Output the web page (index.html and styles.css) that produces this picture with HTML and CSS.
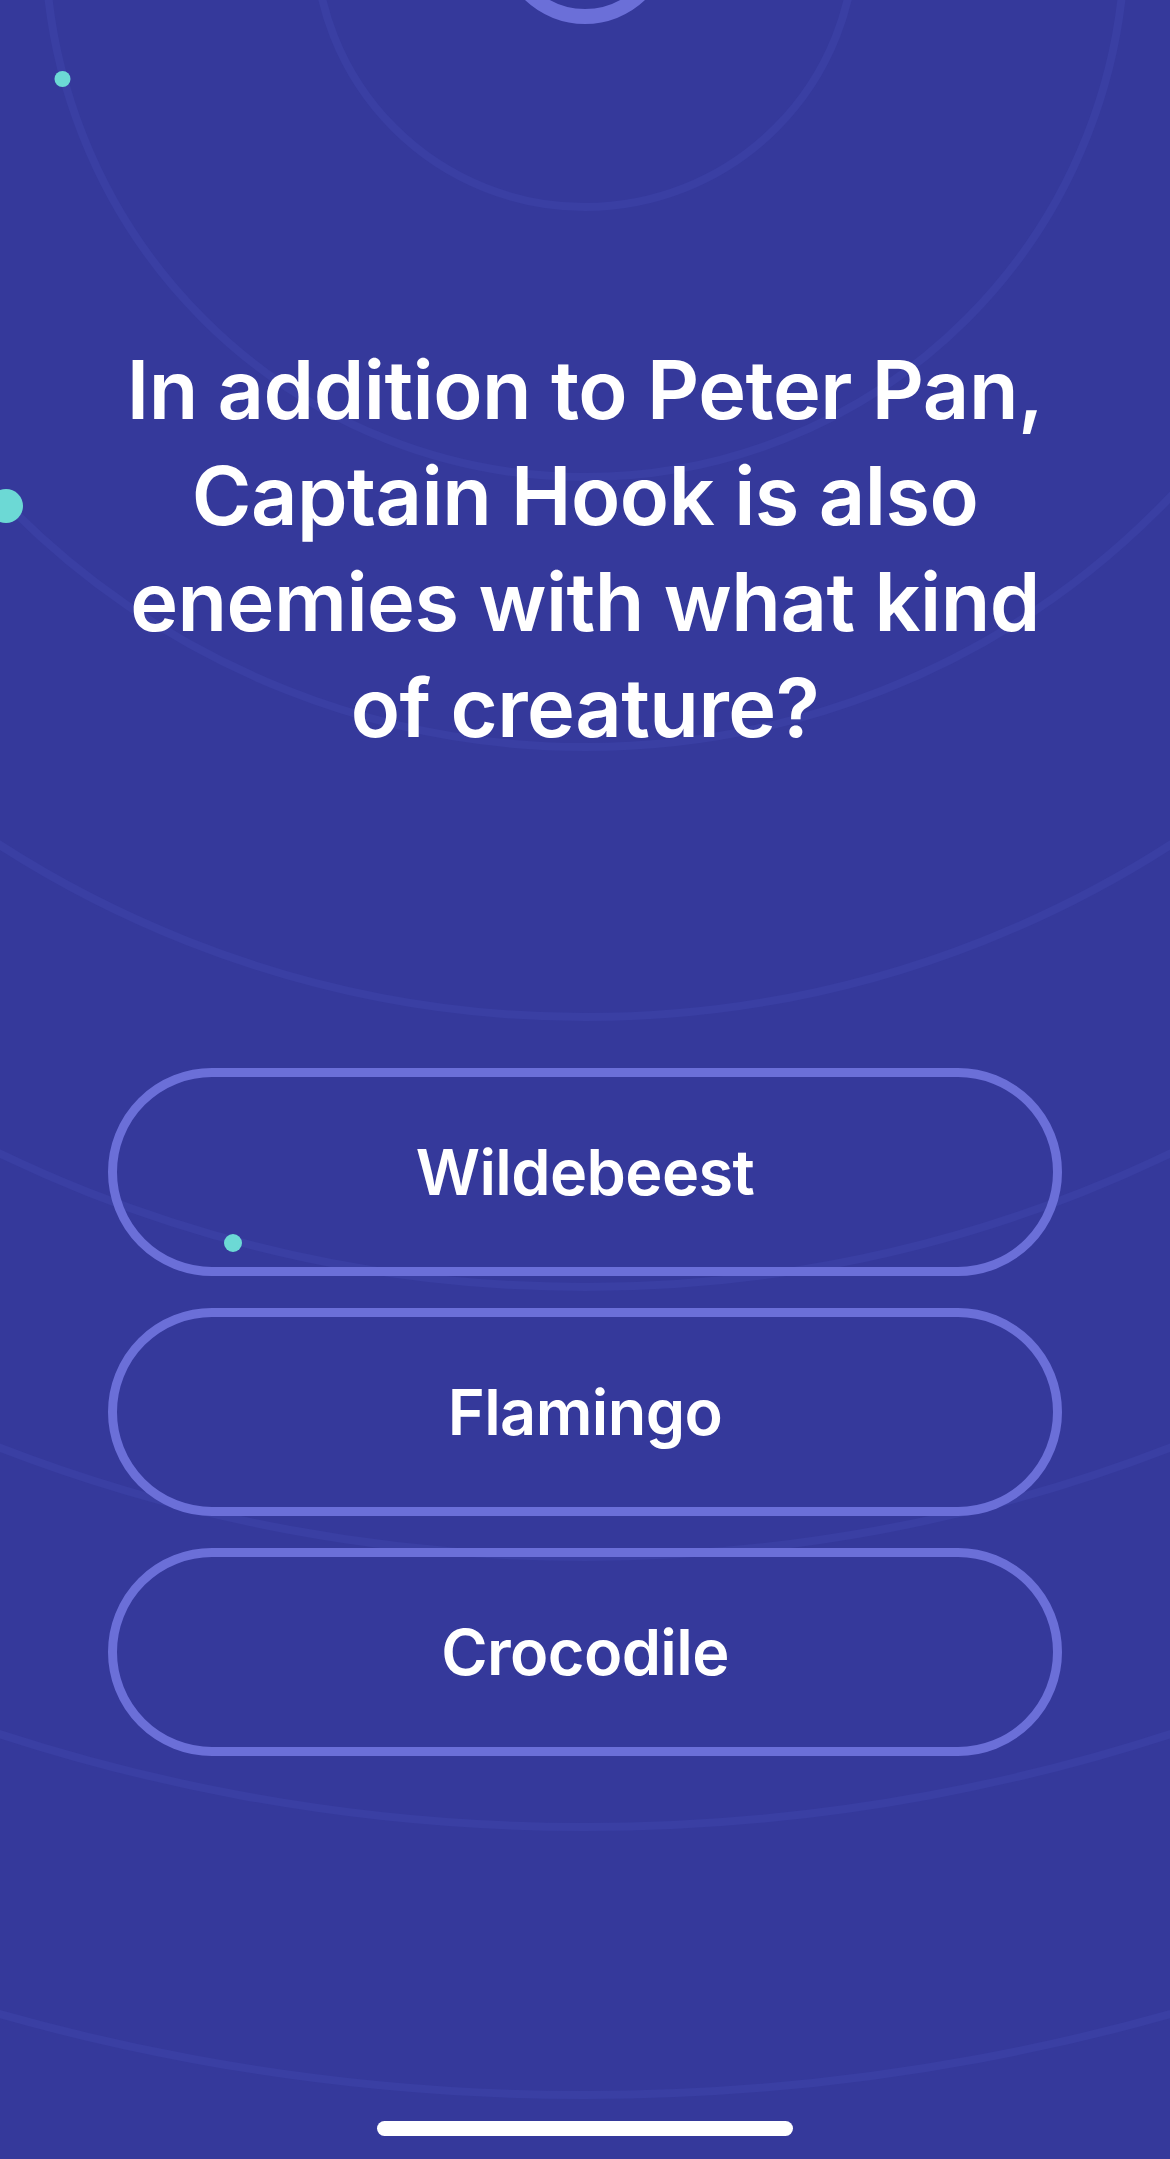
FILE: index.html
```html
<!DOCTYPE html>
<html lang="en">
<head>
<meta charset="utf-8">
<title>Quiz</title>
<link rel="stylesheet" href="styles.css">
</head>
<body>
<div class="screen">
  <svg class="backdrop" width="1170" height="2159" viewBox="0 0 1170 2159" aria-hidden="true">
    <g class="rings" fill="none">
      <circle cx="585" cy="-63" r="270"/>
      <circle cx="585" cy="-63" r="540"/>
      <circle cx="585" cy="-63" r="810"/>
      <circle cx="585" cy="-63" r="1080"/>
      <circle cx="585" cy="-63" r="1350"/>
      <circle cx="585" cy="-63" r="1620"/>
      <circle cx="585" cy="-63" r="1890"/>
      <circle cx="585" cy="-63" r="2158"/>
    </g>
    <circle class="timer" cx="585" cy="-63" r="79.5" fill="none"/>
    <g class="dots">
      <circle cx="62.5" cy="79" r="8"/>
      <circle cx="6" cy="506" r="17"/>
      <circle cx="233" cy="1243" r="9"/>
    </g>
  </svg>

  <main class="content">
    <h1 class="question">In addition to Peter Pan, Captain Hook is also enemies with what kind of creature?</h1>
    <div class="answers">
      <button class="answer">Wildebeest</button>
      <button class="answer">Flamingo</button>
      <button class="answer">Crocodile</button>
    </div>
    <div class="home-indicator"></div>
  </main>
</div>
</body>
</html>
```
FILE: styles.css
```css
html, body {
  margin: 0;
  padding: 0;
}
body {
  background: #35399b;
  font-family: Inter, "Open Sans", "Liberation Sans", sans-serif;
  color: #ffffff;
}
.screen {
  position: relative;
  width: 1170px;
  height: 2159px;
  overflow: hidden;
  background: #35399b;
}
.backdrop {
  position: absolute;
  left: 0;
  top: 0;
}
.rings circle {
  stroke: #3a3fa3;
  stroke-width: 8;
}
.timer {
  stroke: #6b6fd8;
  stroke-width: 15;
}
.dots circle {
  fill: #6cd9d5;
}
.content {
  position: relative;
  display: flex;
  flex-direction: column;
  align-items: center;
}
.question {
  margin: 337px 0 0;
  width: 1000px;
  font-size: 81px;
  line-height: 106px;
  font-weight: 600;
  text-align: center;
  letter-spacing: -0.5px;
}
.answers {
  margin-top: 307px;
  display: flex;
  flex-direction: column;
  gap: 32px;
}
.answer {
  box-sizing: border-box;
  width: 954px;
  height: 208px;
  border: 9px solid #6b6fd8;
  border-radius: 104px;
  background: transparent;
  color: #ffffff;
  font-family: inherit;
  font-size: 63px;
  font-weight: 600;
  letter-spacing: -0.6px;
  display: flex;
  align-items: center;
  justify-content: center;
  padding: 0;
}
.home-indicator {
  margin-top: 365px;
  width: 416px;
  height: 15px;
  border-radius: 8px;
  background: #ffffff;
}
```
